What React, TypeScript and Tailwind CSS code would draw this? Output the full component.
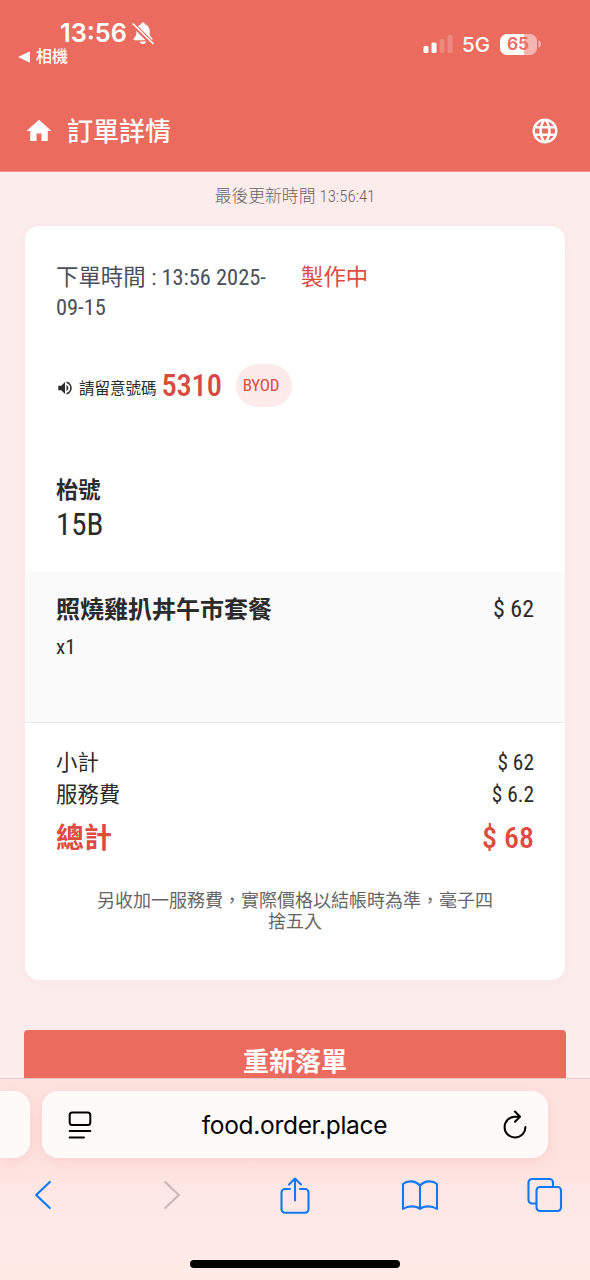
import type { ReactNode } from 'react';
import { MdHome, MdLanguage, MdVolumeUp } from 'react-icons/md';

const charges = [
  { label: '小計', amount: '$ 62' },
  { label: '服務費', amount: '$ 6.2' },
];

// Latin text and digits in the condensed cut
function Condensed({ className = '', children }: { className?: string; children: ReactNode }) {
  return <span className={`inline-block whitespace-nowrap [font-stretch:75%] ${className}`}>{children}</span>;
}

function BellOff() {
  return (
    <svg viewBox="0 0 22 24" className="h-6 w-[22px]" fill="none">
      <path d="M11 1.500c-1 0-1.900.700-2 1.700C5.800 4.200 4.300 7 4.300 10v3.500c0 2-2.800 3-2.800 4.800 0 .6.500.9 1.100.9h16.800c.6 0 1.100-.3 1.100-.9 0-1.800-2.800-2.800-2.800-4.800V10c0-3-1.500-5.800-4.700-6.800-.1-1-1-1.700-2-1.700Z" fill="white" />
      <path d="M7.700 20.500h6.600c-.3 1.500-1.600 2.500-3.300 2.500s-3-1-3.300-2.500Z" fill="white" />
      <path d="M1 3.500 20 22.500" stroke="#eb6b5f" strokeWidth="4.600" />
      <path d="M1.200 3 21 22.500" stroke="white" strokeWidth="1.700" strokeLinecap="round" />
    </svg>
  );
}

function StatusBar() {
  return (
    <div className="flex h-[90px] justify-between">
      <div className="pt-[19px] pl-[18px]">
        <div className="flex h-7 items-center gap-[5px] pl-[42px]">
          <span className="font-['Inter'] text-[25.300px] leading-7 font-semibold">13:56</span>
          <BellOff />
        </div>
        <div className="flex h-[19px] items-center gap-[5px] text-base leading-[19px] font-medium">
          <svg viewBox="0 0 13 12" className="h-3 w-[13px]" fill="white">
            <path d="M1 5.400 11 .7a.7.7 0 0 1 1 .6v9.400a.7.7 0 0 1-1 .6L1 6.600a.7.7 0 0 1 0-1.200Z" />
          </svg>
          相機
        </div>
      </div>
      <div className="flex h-[88px] items-center pr-[49px]">
        <svg viewBox="0 0 30 20" className="mr-[9px] h-5 w-[30px]" fill="white">
          <rect x="0.500" y="12" width="5" height="7" rx="1.500" />
          <rect x="8.500" y="8.500" width="5" height="10.500" rx="1.500" />
          <rect x="16.500" y="5" width="5" height="14" rx="1.500" opacity="0.200" />
          <rect x="24.500" y="1" width="5" height="18" rx="1.500" opacity="0.200" />
        </svg>
        <span className="mr-[10px] pt-[2px] font-['Inter'] text-[20.500px] leading-6 font-medium">5G</span>
        <span className="flex h-[21px] w-[37px] items-center justify-center rounded-[7px] bg-[linear-gradient(to_right,#fff_66%,#f6b5af_66%)] pr-px font-['Inter'] text-[17.500px] leading-none font-semibold text-[#eb6b5f]">
          65
        </span>
        <svg viewBox="0 0 3 8" className="ml-px h-2 w-[3px]" fill="#f6b5af">
          <path d="M.5 0C2 1 3 2.500 3 4S2 7 .5 8Z" />
        </svg>
      </div>
    </div>
  );
}

function Header() {
  return (
    <header className="flex h-[82px] items-center border-b border-[#f2948c] pr-[30px] pl-6">
      <MdHome className="h-[30px] w-[30px]" />
      <h1 className="ml-[13px] flex-1 pt-[3px] text-[26px] leading-8 font-medium">訂單詳情</h1>
      <MdLanguage className="h-[30px] w-[30px]" />
    </header>
  );
}

function OrderCard() {
  return (
    <section className="mx-[25px] h-[754px] overflow-hidden rounded-[14px] bg-white text-[#2b2b2b] shadow-[0_2px_12px_rgba(160,60,60,0.04)]">
      <div className="flex h-[346px] flex-col px-[31px] pt-9">
        <div className="flex text-[22.400px] leading-[30px]">
          <p className="w-[245px] text-[#4a4f5a]">
            下單時間 <Condensed>: 13:56 2025-</Condensed>
            <br />
            <Condensed>09-15</Condensed>
          </p>
          <p className="text-[#de4b40]">製作中</p>
        </div>

        <div className="mt-[42px] flex h-[43px] items-center">
          <MdVolumeUp className="mt-[5px] h-[18px] w-[18px]" />
          <span className="mt-[7px] ml-[5px] text-[15.500px] leading-6">請留意號碼</span>
          <Condensed className="ml-[5px] w-[59px] text-[30.500px] leading-[34px] font-medium -tracking-[0.200px] text-[#d84a40]">5310</Condensed>
          <span className="ml-[15px] flex h-[43px] w-14 items-center justify-center rounded-full bg-[#fdeaea] pr-[5px] text-[17px] text-[#de4b40]">
            <Condensed className="-tracking-[0.200px]">BYOD</Condensed>
          </span>
        </div>

        <h2 className="mt-[68px] text-[22.200px] leading-[30px] font-bold">枱號</h2>
        <Condensed className="mt-px text-[31px] leading-[38px]">15B</Condensed>
      </div>

      <div className="h-[151px] border-b border-[#e6eaec] bg-[#fafafa] px-[31px] pt-[21px]">
        <div className="flex justify-between leading-[34px]">
          <h3 className="text-2xl leading-[34px] font-bold">照燒雞扒丼午市套餐</h3>
          <Condensed className="text-2xl leading-[33px]">$ 62</Condensed>
        </div>
        <Condensed className="mt-1 text-[21px] leading-[32px]">x1</Condensed>
      </div>

      <div className="px-[31px] pt-6">
        {charges.map((charge) => (
          <div key={charge.label} className="flex h-8 justify-between text-[21.400px] leading-8">
            <span>{charge.label}</span>
            <Condensed>{charge.amount}</Condensed>
          </div>
        ))}
        <div className="mt-2 flex h-10 justify-between text-[28px] leading-10 font-bold text-[#de4b40]">
          <span>總計</span>
          <Condensed className="text-[30px] leading-[38px] font-medium">$ 68</Condensed>
        </div>
        <p className="mx-auto mt-[31px] w-[400px] text-center text-lg leading-[21px] text-[#666]">
          另收加一服務費，實際價格以結帳時為準，毫子四捨五入
        </p>
      </div>
    </section>
  );
}

function BrowserBar() {
  return (
    <footer className="h-[202px] overflow-hidden border-t border-[#ecc9c9] bg-[linear-gradient(to_bottom,#fde3df,#fde2df_40%,#fee8e5_60%,#feebe6)]">
      <div className="flex gap-3 pt-3">
        <div className="h-[67px] w-[30px] rounded-r-[16px] bg-[#fffafa] shadow-[0_3px_14px_rgba(230,90,80,0.12)]" />
        <div className="flex h-[67px] w-[506px] items-center rounded-[16px] bg-[#fffafa] pr-5 pl-[25px] text-black shadow-[0_3px_14px_rgba(230,90,80,0.12)]">
          <svg viewBox="0 0 26 30" className="h-[30px] w-[26px]" fill="none" stroke="currentColor" strokeWidth="2" strokeLinecap="round">
            <rect x="2.700" y="2.400" width="20.600" height="12.600" rx="2.500" />
            <path d="M2.700 21h20.600M2.700 27.400h14.300" />
          </svg>
          <span className="flex-1 pr-[6px] text-center font-['Inter'] text-[24.500px] leading-8 tracking-[-0.300px]">food.order.place</span>
          <svg viewBox="0 0 26 30" className="h-[30px] w-[26px]" fill="none" stroke="currentColor" strokeWidth="2" strokeLinecap="round" strokeLinejoin="round">
            <path d="M17.500 6.700H13A10.400 10.400 0 1 0 23.400 17M13 1.500l5 5.200-5 5" />
          </svg>
        </div>
      </div>
      <nav className="mt-[17px] flex h-10 items-center pr-[27px] pl-[34px] text-[#1279f2]">
        <svg viewBox="0 0 18 30" className="h-[30px] w-[18px]" fill="none" stroke="currentColor" strokeWidth="2.200" strokeLinecap="round" strokeLinejoin="round">
          <path d="M15.800 2 2.200 15l13.600 13" />
        </svg>
        <svg viewBox="0 0 18 30" className="ml-[111px] h-[30px] w-[18px] text-[#cdb7b6]" fill="none" stroke="currentColor" strokeWidth="2.200" strokeLinecap="round" strokeLinejoin="round">
          <path d="M2.200 2 15.800 15 2.200 28" />
        </svg>
        <svg viewBox="0 0 32 38" className="ml-[98px] h-[38px] w-8" fill="none" stroke="currentColor" strokeWidth="2.100" strokeLinecap="round" strokeLinejoin="round">
          <path d="M11 13H6a3.500 3.500 0 0 0-3.500 3.500v16.700A3.500 3.500 0 0 0 6 36.700h20a3.500 3.500 0 0 0 3.500-3.500V16.500A3.500 3.500 0 0 0 26 13h-5M16 24.500V2.500M10 8.500l6-6 6 6" />
        </svg>
        <svg viewBox="0 0 38 32" className="ml-[90px] h-8 w-[38px]" fill="none" stroke="currentColor" strokeWidth="2.100" strokeLinecap="round" strokeLinejoin="round">
          <path d="M19 6.500C15 1.800 7 .8 2 5v25c5-3.500 13-3.500 17 0M19 6.500C23 1.800 31 .8 36 5v25c-5-3.500-13-3.500-17 0M19 6.500V30" />
        </svg>
        <svg viewBox="0 0 36 36" className="ml-[88px] h-9 w-9" fill="none" stroke="currentColor" strokeWidth="2.100" strokeLinejoin="round">
          <path d="M9.500 26.500H5A3.500 3.500 0 0 1 1.500 23V5.500A3.500 3.500 0 0 1 5 2h17.500A3.500 3.500 0 0 1 26 5.500V10" />
          <rect x="9.500" y="10" width="24.500" height="24" rx="3.500" />
        </svg>
      </nav>
      <div className="mx-auto mt-[45px] h-2 w-[210px] rounded-full bg-black" />
    </footer>
  );
}

export default function App() {
  return (
    <div className="flex h-[1280px] w-[590px] flex-col overflow-hidden bg-[#fdecec] font-['Roboto','Noto_Sans_CJK_TC',sans-serif]">
      <div className="bg-[#eb6b5f] text-white">
        <StatusBar />
        <Header />
      </div>
      <main className="h-[906px] overflow-hidden">
        <p className="flex h-[54px] items-center justify-center pb-1 text-[16.800px] font-light text-[#666]">
          最後更新時間&nbsp;<Condensed>13:56:41</Condensed>
        </p>
        <OrderCard />
        <button className="mx-6 mt-[50px] h-16 w-[542px] rounded-[4px] bg-[#eb6b5f] text-[26px] leading-[60px] font-bold text-white">
          重新落單
        </button>
      </main>
      <BrowserBar />
    </div>
  );
}
